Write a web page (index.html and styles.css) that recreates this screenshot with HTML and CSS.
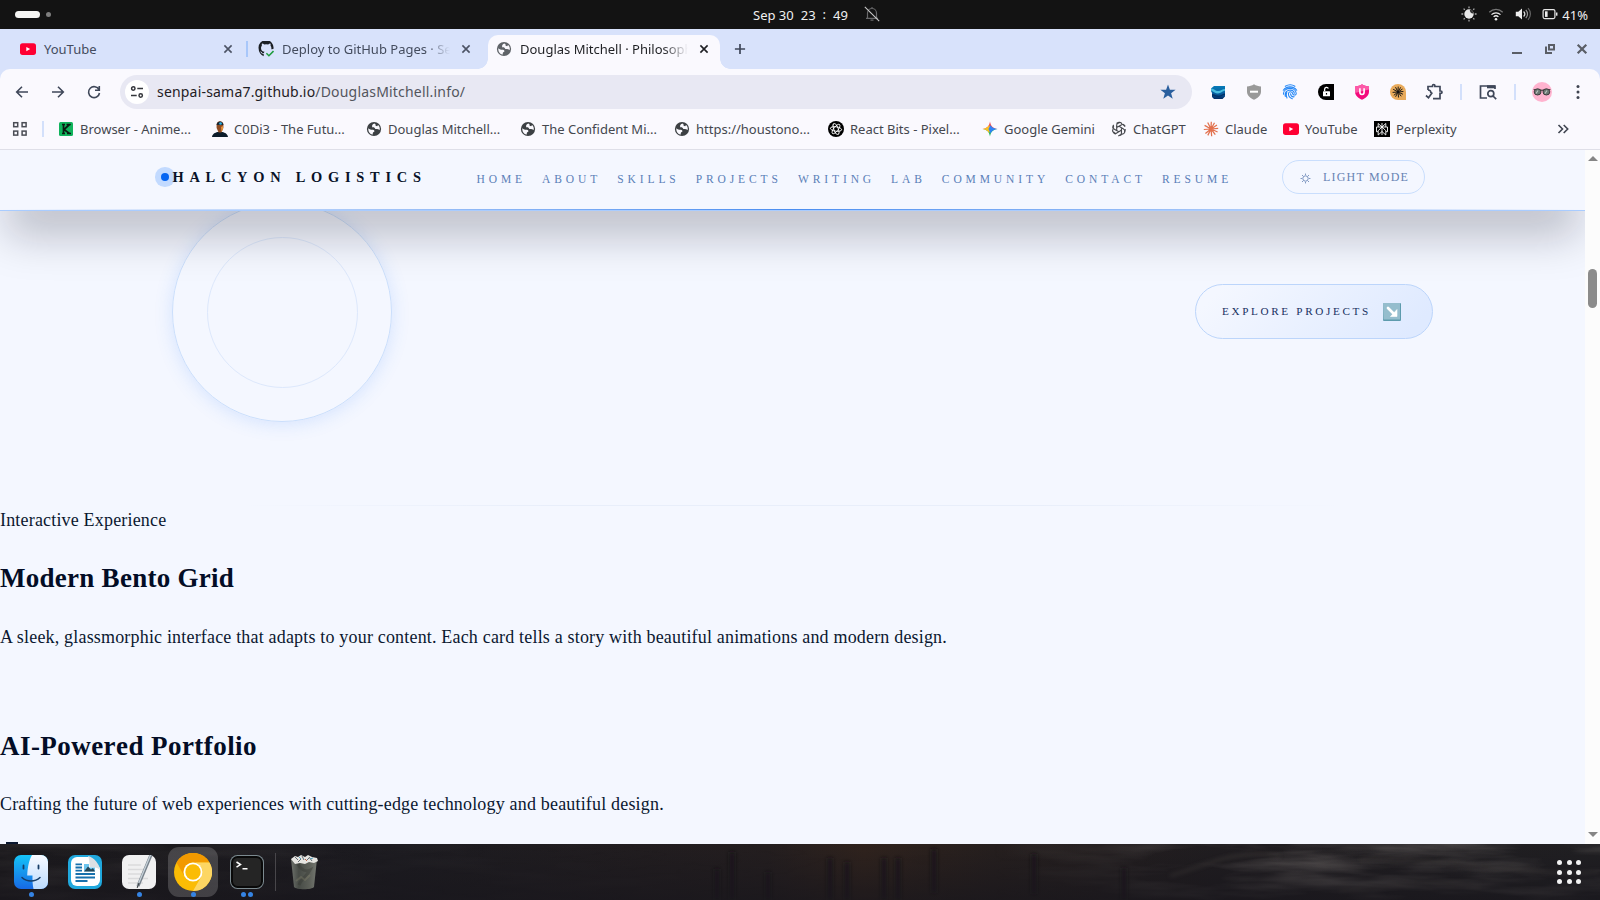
FILE: index.html
```html
<!DOCTYPE html>
<html lang="en">
<head>
<meta charset="utf-8">
<title>Douglas Mitchell · Philosophy</title>
<link rel="stylesheet" href="styles.css">
</head>
<body>
<svg class="defs" width="0" height="0" aria-hidden="true">
  <defs>
    <symbol id="globe" viewBox="0 0 16 16"><circle cx="8" cy="8" r="7.1" fill="currentColor"/><path d="M8.300 2.500C6 3.500 5.700 5 6.400 6.400c1.300-.4 2.400.2 2.900 1.600 1.300-.2 2.700-.2 4.400 1.100.4-2.200-.2-4-1.600-5.200l-1 1.300-1.500-.5-.1-1.500Z" fill="#faf9fe"/><path d="M2.300 7.300c1.500 1.600 3 1.500 4.700 1.500.9 0 1.500.8 1.400 1.800L7 11.400l-.5 2.300C4 13.200 2 10.700 2.300 7.300" fill="#faf9fe"/></symbol>
    <symbol id="yt" viewBox="0 0 16 16"><rect y="2.3" width="16" height="11.6" rx="2.6" fill="#ff0033"/><path d="M6.3 5.9v4.4L10.2 8.1Z" fill="#fff"/></symbol>
    <symbol id="cross" viewBox="0 0 16 16"><path d="m4.4 4.4 7.2 7.2m0-7.2-7.2 7.2" fill="none" stroke="currentColor" stroke-width="1.6"/></symbol>
    <symbol id="burst" viewBox="0 0 16 16"><path d="M8 8 8.3.8M8 8 11.5 1.8M8 8l6-4M8 8l7.2-.7M8 8l6.600 3M8 8l4.300 5.700M8 8l.7 7.300M8 8l-3.200 6.400M8 8l-5.600 4.400M8 8 .8 8.500M8 8 1.600 4.400M8 8 4.700 1.500" stroke="currentColor" stroke-width="1.250" fill="none"/></symbol>
  </defs>
</svg>
<div class="desktop">
  <div class="topbar">
    <div class="workspaces"><i class="pill"></i><i class="dot"></i></div>
    <div class="clock"><span>Sep 30</span><span>23</span><span class="colon">:</span><span>49</span>
      <svg class="bell" width="16" height="16" viewBox="0 0 16 16" fill="none"><path d="M3.500 12.200V7a4.500 4.500 0 0 1 9 0v5.200M2 12.400h12M8 1v1.600M6.500 14.200h3" stroke="#68686a" stroke-width="1.200"/><path d="m.8.800 14.400 14.400" stroke="#c9c9c9" stroke-width="1.100"/></svg>
    </div>
    <div class="tray">
      <svg width="16" height="16" viewBox="0 0 16 16"><circle cx="8" cy="8" r="4.700" fill="#e8e8e8"/><path d="M9 3.400A3.200 3.200 0 0 0 12.500 7.500 4.600 4.600 0 0 0 9 3.400" fill="#333"/><path d="M8 .4v1.800M8 13.800v1.800M.4 8h1.800M13.800 8h1.800M2.600 2.600l1.200 1.200M12.200 12.200l1.200 1.200M2.600 13.400l1.200-1.200M12.200 3.800l1.200-1.200" stroke="#a9a9a9" stroke-width="1.300"/></svg>
      <svg width="16" height="16" viewBox="0 0 16 16" fill="none"><path d="M1.300 6.200a9.500 9.500 0 0 1 13.400 0" stroke="#777" stroke-width="1.300"/><path d="M3.500 8.600a6.500 6.500 0 0 1 9 0M5.600 10.900a3.500 3.500 0 0 1 4.800 0" stroke="#eee" stroke-width="1.300"/><circle cx="8" cy="13.200" r="1.300" fill="#eee"/></svg>
      <svg width="16" height="16" viewBox="0 0 16 16" fill="none"><path d="M.8 5.800h2.500L7 2.500v11L3.300 10.200H.8Z" fill="#eee"/><path d="M8.600 5.500c1.400 1.400 1.400 3.600 0 5" stroke="#ddd" stroke-width="1.200"/><path d="M10.800 3.800c2.300 2.400 2.300 6 0 8.400" stroke="#999" stroke-width="1.200"/><path d="M13 2.200c3.200 3.400 3.200 8.200 0 11.600" stroke="#666" stroke-width="1.200"/></svg>
      <svg width="16" height="16" viewBox="0 0 16 16" fill="none"><rect x="1.100" y="3.600" width="11.800" height="9" rx="1.500" stroke="#e6e6e6" stroke-width="1.200"/><rect x="3" y="5.300" width="2.600" height="5.600" fill="#eee"/><path d="M14.700 6.500v3.200" stroke="#e6e6e6" stroke-width="1.500"/></svg>
      <span>41%</span>
    </div>
  </div>

  <div class="tabstrip">
    <div class="tab"><svg width="16" height="16"><use href="#yt"/></svg><span class="title">YouTube</span><svg class="close" width="16" height="16"><use href="#cross"/></svg></div>
    <div class="tab divided"><svg width="16" height="16" viewBox="0 0 16 16"><path d="M5.700 15.200v-2.400c-2 .3-2.600-.9-3.200-1.700l-.7-.5c1.500-.4 2 .9 2.600 1.300.6.300 1.100.200 1.500 0 .1-.5.400-.9.700-1.100C4.300 10.500 3 9.500 3 7c0-1 .3-1.700.9-2.300-.2-.6-.2-1.300.1-2.100.9 0 1.600.500 2.200.9a8 8 0 0 1 4 0c.6-.4 1.400-.9 2.200-.9.300.8.300 1.500.1 2.100.6.600.9 1.400.9 2.300 0 .5 0 .9-.2 1.300l2.200-.3A7.500 7.500 0 1 0 .6 7.600c0 3.500 2.100 6.400 5.100 7.600" fill="#1b1f24"/><path d="m8.400 12.300 2.500 2.400 4.600-4.600" fill="none" stroke="#1f9c3d" stroke-width="1.500"/></svg><span class="title fade">Deploy to GitHub Pages · Se</span><svg class="close" width="16" height="16"><use href="#cross"/></svg></div>
    <div class="tab active"><svg width="16" height="16" class="gray"><use href="#globe"/></svg><span class="title fade">Douglas Mitchell · Philosoph</span><svg class="close" width="16" height="16"><use href="#cross"/></svg></div>
    <svg class="newtab" width="16" height="16" viewBox="0 0 16 16"><path d="M8 2.900v10.200M2.900 8h10.200" stroke="#3f4759" stroke-width="1.700"/></svg>
    <div class="wincontrols">
      <svg width="12" height="12" viewBox="0 0 12 12"><path d="M1 10h10" stroke="#5a5e66" stroke-width="2"/></svg>
      <svg width="12" height="12" viewBox="0 0 12 12" fill="none" stroke="#5a5e66" stroke-width="2"><path d="M5 2h5v4.500H5ZM2 3.500V10h6"/></svg>
      <svg width="12" height="12" viewBox="0 0 12 12"><path d="m1.700 1.700 8.600 8.600m0-8.600-8.600 8.600" stroke="#5a5e66" stroke-width="2.200"/></svg>
    </div>
  </div>

  <div class="chrome-wrap">
  <div class="chrome">
    <div class="toolbar">
      <div class="navbtns">
        <svg width="16" height="16" viewBox="0 0 16 16"><path d="M14 8H3M8 2.700 2.700 8 8 13.300"/></svg>
        <svg width="16" height="16" viewBox="0 0 16 16"><path d="M2 8h11M8 2.700 13.300 8 8 13.300"/></svg>
        <svg width="16" height="16" viewBox="0 0 16 16"><path d="M13 5.700A5.500 5.500 0 1 0 13.500 9M13.300 1.900v4.300H9"/></svg>
      </div>
      <div class="omnibox">
        <span class="site"><svg width="14" height="14" viewBox="0 0 14 14" fill="none" stroke="#33353b" stroke-width="1.500"><circle cx="3.300" cy="3.500" r="1.700"/><path d="M7.300 3.500H13M1 10.500h5.700"/><circle cx="10.700" cy="10.500" r="1.700"/></svg></span>
        <span class="url">senpai-sama7.github.io<em>/DouglasMitchell.info/</em></span>
        <svg class="star" width="16" height="16" viewBox="0 0 16 16"><path d="m8 .4 1.900 5.300 5.700.1-4.500 3.500 1.600 5.500L8 11.600l-4.700 3.200 1.600-5.500L.4 5.800l5.700-.1Z" fill="#2a5f9e"/></svg>
      </div>
      <div class="extensions">
        <span><svg width="16" height="16" viewBox="0 0 16 16"><defs><linearGradient id="sea" x1="0" y1="0" x2="0" y2="1"><stop offset="0" stop-color="#067bb8"/><stop offset=".6" stop-color="#075c9e"/><stop offset="1" stop-color="#032a62"/></linearGradient></defs><path d="M4 2h11v10.500L12.500 15H4L2 13V9L1 7V4.500Z" fill="url(#sea)"/><path d="M1 4.500c3-.3 4 2.500 7 2.500 3 0 4-2 7-2v1.800c-3 .2-4 2.700-7 2.700S4 7.500 1 6.500Z" fill="#48bddf"/><path d="M2 10c3 0 4 1.800 6.500 1.800S12.500 9.500 15 9.500V11c-3 0-4 2-6.500 2S5 12 2 12Z" fill="#023268"/></svg></span>
        <span><svg width="16" height="16" viewBox="0 0 16 16"><path d="M8 .3c2 1.500 4.500 2 7 2.200v5.300c0 4-4 6.700-7 8-3-1.300-7-4-7-8V2.500C3.500 2.300 6 1.800 8 .3" fill="#999"/><path d="M4 7.700h8" stroke="#fff" stroke-width="2"/></svg></span>
        <span><svg width="16" height="16" viewBox="0 0 16 16" fill="none" stroke="#2387f7" stroke-width="1.100" stroke-linecap="round"><path d="M3.300 2.300C6.500.3 10 .3 12.900 2.300M1.300 6.200C4.500 1.700 11.500 1.700 14.700 6.200M1.500 10.300C1 3.200 13.500 2 14.200 9.300c.2 2.300-3.200 2.200-3.500.3C10.400 7.300 6.800 7 6.500 9.500c-.2 2.200 1 4.300 3.800 5.300M3.300 12.500C2 5.500 11.500 4 12.400 9.300M5 14c-.8-2-1-4-.2-5.200M8.500 9.700c.3 2.300 1.800 3.300 3.700 3.100"/></svg></span>
        <span><svg width="16" height="16" viewBox="0 0 16 16"><path d="M8 0h8v16H8A8 8 0 0 1 8 0" fill="#000"/><rect x="5" y="7.200" width="7" height="5" rx=".5" fill="#fff"/><path d="M6.600 7V5.300a2 2 0 0 1 3.800-.8" fill="none" stroke="#fff" stroke-width="1.300"/><path d="M8.500 9v1.600" stroke="#000" stroke-width="1.200"/></svg></span>
        <span><svg width="16" height="16" viewBox="0 0 16 16"><path d="M8 .3c2 1.500 4.500 2 7 2.200v5.300c0 4-4 6.700-7 8-3-1.300-7-4-7-8V2.500C3.500 2.300 6 1.800 8 .3" fill="#f30a7c"/><path d="M8 .3c2 1.500 4.500 2 7 2.200v3L1 9V2.500C3.500 2.300 6 1.800 8 .3" fill="#fc5aa8"/><path d="M5.900 4.300v4c0 2.900 4.200 2.900 4.200 0v-4" fill="none" stroke="#fff" stroke-width="1.600"/></svg></span>
        <span><svg width="16" height="16" viewBox="0 0 16 16"><path d="M8 0a8 8 0 0 1 8 8v8H8A8 8 0 0 1 8 0" fill="#e9ab5b"/><use href="#burst" x="2" y="2" width="12" height="12" color="#111"/></svg></span>
        <span><svg width="18" height="18" viewBox="0 0 18 18" fill="none" stroke="#3f4759" stroke-width="1.700"><path d="M3 7V3.500h4.500V2.700a1.200 1.200 0 0 1 2.400 0v.8H15V8h.8a1.200 1.200 0 0 1 0 2.400H15v5.300H8"/><path d="m1 12.500 2.500 2.300L7.300 9.500M3 7c2 0 3 1 2.800 3"/></svg></span>
        <i></i>
        <span><svg width="18" height="18" viewBox="0 0 18 18" fill="none" stroke="#3f4759" stroke-width="1.700"><path d="M8 15H1.500V3H16v3"/><path d="M8 3.800h8" stroke-width="3"/><circle cx="11.800" cy="10.700" r="3"/><path d="m14 13 3.200 3.200"/></svg></span>
        <i></i>
        <span><svg width="20" height="20" viewBox="0 0 20 20"><circle cx="10" cy="10" r="10" fill="#ffb3cf"/><path d="M1.600 7.500c5 0 6 0 8.400.9 2.400-.9 3.400-.9 8.400-.9" fill="none" stroke="#4a4245" stroke-width="1.200"/><ellipse cx="5.600" cy="9.900" rx="3.400" ry="3.100" fill="#6b7672" stroke="#40393c"/><ellipse cx="14.400" cy="9.900" rx="3.400" ry="3.100" fill="#6b7672" stroke="#40393c"/><path d="m4 11.500 2-3M13 11.500l2-3" stroke="#bcc5c0" stroke-width="1.200"/></svg></span>
        <span><svg width="16" height="16" viewBox="0 0 16 16" fill="#3f4450"><circle cx="8" cy="2.600" r="1.500"/><circle cx="8" cy="8" r="1.500"/><circle cx="8" cy="13.400" r="1.500"/></svg></span>
      </div>
    </div>
    <div class="bookmarks">
      <svg class="apps" width="16" height="16" viewBox="0 0 16 16" fill="none" stroke="#4a4d55" stroke-width="1.500"><rect x="1.700" y="1.700" width="4" height="4"/><rect x="10.100" y="1.700" width="4" height="4"/><rect x="1.700" y="10.100" width="4" height="4"/><rect x="10.100" y="10.100" width="4" height="4"/></svg>
      <i class="sep"></i>
      <div class="bm wide"><svg width="16" height="16" viewBox="0 0 16 16"><rect x="1" y="1" width="14" height="14" rx="1.500" fill="#10b35c"/><path d="M4 3.500h3M5.500 3.500v9M4 12.500h3M8.500 3.500h4.300M11.500 3.500 6 8.500l5.500 4M9 12.500h4" stroke="#0a1a12" stroke-width="1.700" fill="none"/></svg>Browser - Anime...</div>
      <div class="bm wide"><svg width="16" height="16" viewBox="0 0 16 16"><path d="M0 16c.5-3.500 3-4 5.500-5h5c2.500 1 5 1.500 5.500 5Z" fill="#0c1c2b"/><path d="M4.600 3.500C5-.8 11-.8 11.400 3.500V7l-2 4.500H6.600l-2-4.500Z" fill="#8c4a22"/><path d="M4.600 4C4.800-.7 11.200-.7 11.400 4Z" fill="#182733"/><circle cx="8.500" cy="2.500" r="1.300" fill="#32b6e8"/><path d="m9 6 2-1v3l-1.500 3Z" fill="#e59239"/></svg>C0Di3 - The Futu...</div>
      <div class="bm wide"><svg width="16" height="16" class="dark"><use href="#globe"/></svg>Douglas Mitchell...</div>
      <div class="bm wide"><svg width="16" height="16" class="dark"><use href="#globe"/></svg>The Confident Mi...</div>
      <div class="bm wide"><svg width="16" height="16" class="dark"><use href="#globe"/></svg>https://houstono...</div>
      <div class="bm wide"><svg width="16" height="16" viewBox="0 0 16 16" fill="none" stroke="#fff" stroke-width=".9"><circle cx="8" cy="8" r="8" fill="#000" stroke="none"/><ellipse cx="8" cy="8" rx="5.700" ry="2.200" transform="rotate(8 8 8)"/><ellipse cx="8" cy="8" rx="5.700" ry="2.200" transform="rotate(68 8 8)"/><ellipse cx="8" cy="8" rx="5.700" ry="2.200" transform="rotate(128 8 8)"/></svg>React Bits - Pixel...</div>
      <div class="bm gem"><svg width="16" height="16" viewBox="0 0 16 16"><path d="M8 .5C8.700 5 11 7.300 15.500 8H.5C5 7.300 7.300 5 8 .5" fill="#f5484a"/><path d="M8 15.500C8.700 11 11 8.700 15.500 8H.5C5 8.700 7.300 11 8 15.500" fill="#1bb35a"/><path d="M.5 8C4 7.500 6 6 7 4l2 4-2 4C6 10 4 8.500.5 8" fill="#fcc021"/><path d="M15.500 8C11 7.300 9.300 6 8.600 4L6.500 8l2.100 4.500C9.500 10 11.500 8.600 15.500 8" fill="#2e83f6"/></svg>Google Gemini</div>
      <div class="bm gpt"><svg width="16" height="16" viewBox="0 0 16 16" fill="none" stroke="#45474c" stroke-width="1.150"><g id="petal"><path d="M5.700 9.300V4.100a2.800 2.800 0 0 1 5.300-1.200M5.700 6.500l4.500-2.600a2.800 2.800 0 0 1 4 1.500"/></g><use href="#petal" transform="rotate(120 8 8)"/><use href="#petal" transform="rotate(240 8 8)"/><circle cx="8" cy="8" r="6.200" stroke-dasharray="3 3.500"/></svg>ChatGPT</div>
      <div class="bm cla"><svg width="16" height="16" class="coral"><use href="#burst"/></svg>Claude</div>
      <div class="bm you"><svg width="16" height="16"><use href="#yt"/></svg>YouTube</div>
      <div class="bm"><svg width="16" height="16" viewBox="0 0 16 16" fill="none" stroke="#fff" stroke-width=".9"><path d="M0 0h16v16H0Z" fill="#000" stroke="none"/><path d="M8 2v12M8 6 4.200 2.500V6M8 6l3.800-3.500V6M2.500 6h11v4.700h-1.700V14L8 10.500 4.200 14v-3.300H2.500ZM8 6l-3.800 3.700v1M8 6l3.800 3.700v1"/></svg>Perplexity</div>
      <svg class="more" width="14" height="14" viewBox="0 0 14 14" fill="none" stroke="#3f4450" stroke-width="1.600"><path d="m2.500 3 4 4-4 4M7.700 3l4 4-4 4"/></svg>
    </div>
  </div>
  </div>

  <div class="viewport">
    <div class="page">
      <header class="site-header">
        <div class="brand"><i class="orb"></i>HALCYON LOGISTICS</div>
        <nav><a>HOME</a><a>ABOUT</a><a>SKILLS</a><a>PROJECTS</a><a>WRITING</a><a>LAB</a><a>COMMUNITY</a><a>CONTACT</a><a>RESUME</a></nav>
        <div class="mode"><svg width="11" height="11" viewBox="0 0 11 11" fill="none" stroke="#6783b4" stroke-width=".9"><circle cx="5.500" cy="5.500" r="2.700"/><path d="M5.500.6v1.300M5.500 9.100v1.300M.6 5.500h1.300M9.100 5.500h1.300M2 2l.9.9M8.100 8.100l.9.9M2 9l.9-.9M8.100 2.900 9 2"/></svg>LIGHT MODE</div>
      </header>
      <section class="hero">
        <div class="ring"><div class="inner"></div></div>
        <div class="cta"><span>EXPLORE PROJECTS</span><svg width="18" height="18" viewBox="0 0 18 18"><rect width="18" height="18" rx="1" fill="#5d9bad"/><path d="M0 0h17v16.500H.5Z" fill="#95bdcd"/><path d="m5 5 6 6" stroke="#fff" stroke-width="2.700" stroke-linecap="round"/><path d="M14 6.500V13.500H7.500Z" fill="#fff" stroke="#fff" stroke-width=".6"/></svg></div>
      </section>
      <section class="copy">
        <div>Interactive Experience</div>
        <h2>Modern Bento Grid</h2>
        <p>A sleek, glassmorphic interface that adapts to your content. Each card tells a story with beautiful animations and modern design.</p>
        <h2 class="second">AI-Powered Portfolio</h2>
        <p>Crafting the future of web experiences with cutting-edge technology and beautiful design.</p>
        <i class="card-top"></i>
      </section>
    </div>
    <div class="scrollbar"><i class="up"></i><i class="thumb"></i><i class="down"></i></div>
  </div>

  <div class="dock">
    <svg class="wallpaper" width="1600" height="56" viewBox="0 0 1600 56" preserveAspectRatio="none">
      <defs>
        <filter id="cloud" x="0" y="0" width="100%" height="100%"><feTurbulence type="fractalNoise" baseFrequency=".008 .06" numOctaves="4" seed="7"/><feColorMatrix values="0 0 0 0 .3 0 0 0 0 .27 0 0 0 0 .25 1.600 0 0 0 -.65"/></filter>
        <filter id="soft"><feGaussianBlur stdDeviation="2"/></filter>
        <linearGradient id="ground"><stop offset="0" stop-color="#1b191c"/><stop offset=".25" stop-color="#1c1b20"/><stop offset=".48" stop-color="#241e1f"/><stop offset=".54" stop-color="#30231d"/><stop offset=".62" stop-color="#261f1e"/><stop offset=".76" stop-color="#201d20"/><stop offset="1" stop-color="#201f22"/></linearGradient>
        <linearGradient id="reach"><stop offset="0" stop-color="#444"/><stop offset=".25" stop-color="#111"/><stop offset=".62" stop-color="#000"/><stop offset=".8" stop-color="#999"/><stop offset="1" stop-color="#888"/></linearGradient>
        <mask id="sky"><rect width="1600" height="56" fill="url(#reach)"/></mask>
        <linearGradient id="shade" x1="0" y1="0" x2="0" y2="1"><stop offset="0" stop-color="#18161c" stop-opacity="0"/><stop offset="1" stop-color="#18161c" stop-opacity=".7"/></linearGradient>
      </defs>
      <rect width="1600" height="56" fill="url(#ground)"/>
      <g mask="url(#sky)"><rect width="1600" height="56" filter="url(#cloud)"/></g>
      <g filter="url(#soft)" stroke="#1a181d" stroke-width="5" fill="none"><path d="M717 25v31M732 8v48M768 28v28M830 14v42M847 18v38M884 14v42M898 14v42M934 5v44M1034 10v40M1124 24v32"/></g>
      <g filter="url(#soft)" stroke="#4e4844" stroke-width="2.500" fill="none" opacity=".6"><path d="M1360 16c60-6 90 6 130 8s70 8 110 4M1340 46c50-2 90-12 140-4M1170 32c40-12 60-26 110-20"/></g>
      <rect width="1600" height="56" fill="url(#shade)"/>
    </svg>
    <div class="apps-row">
      <div class="app"><svg width="34" height="34" viewBox="0 0 34 34"><defs><linearGradient id="fb" x1="0" y1="0" x2="0" y2="1"><stop offset="0" stop-color="#16c4f8"/><stop offset="1" stop-color="#1769e4"/></linearGradient><linearGradient id="fw" x1="0" y1="0" x2="0" y2="1"><stop offset="0" stop-color="#f8faff"/><stop offset="1" stop-color="#bcdcff"/></linearGradient></defs><rect width="34" height="34" rx="7" fill="url(#fb)"/><path d="M18 0h9a7 7 0 0 1 7 7v20a7 7 0 0 1-7 7h-7.500c-.8-4-1.200-8-1-13.500h-5.300C13.500 13 15 5 18 0" fill="url(#fw)"/><path d="M9.500 10.500v3M24.500 10.500v3" stroke="#173d66" stroke-width="1.800" stroke-linecap="round"/><path d="M8 22.500c5 4.700 13 4.700 18 0" stroke="#173d66" stroke-width="1.500" fill="none" stroke-linecap="round"/></svg><b></b></div>
      <div class="app"><svg width="34" height="34" viewBox="0 0 34 34"><rect width="34" height="34" rx="7" fill="#20a8dd"/><path d="M9 2h12l11 11v12a6 6 0 0 1-6 6H9a6 6 0 0 1-6-6V8a6 6 0 0 1 6-6" fill="#fff"/><path d="M20 1c2 5 1 8 2 11 3 0 7 0 10 3 0-5-6-13-12-14" fill="#dce0e4"/><path d="M7.500 9.300H14M7.500 12.500H14M7.500 15.700H14M7.500 19h19.500M7.500 22.500h19.500M7.500 26h12" stroke="#1771ad" stroke-width="1.800"/><path d="M16 16.500V9h5v3.500h6v4Z" fill="#6cc5ef"/><path d="m16 16.500 4-5 3 3 2-1.500 2 3.500Z" fill="#264657"/></svg></div>
      <div class="app"><svg width="34" height="34" viewBox="0 0 34 34"><rect width="34" height="34" rx="7" fill="#f0f0f1"/><path d="M6 10h13M6 14.500h17M6 19h15M6 23.500h20M6 28h15" stroke="#dadadc" stroke-width="1.500"/><path d="M29 0 16 31" stroke="#77818b" stroke-width="3.200"/><path d="M28.500 0 15.500 31" stroke="#c6d1d9" stroke-width="1.300"/><path d="m17 28-1.800 4.700" stroke="#3f454a" stroke-width="1.200"/></svg><b></b></div>
      <div class="app current"><svg width="38" height="38" viewBox="0 0 38 38"><circle cx="19" cy="19" r="19" fill="#fbbc05"/><path d="M2.500 9.500A19 19 0 0 1 35.500 9.500H19A9.500 9.500 0 0 0 10.800 23.700Z" fill="#f29900"/><path d="M35.500 9.500A19 19 0 0 1 19 38l8.200-14.300A9.500 9.500 0 0 0 19 9.500Z" fill="#fdd663"/><circle cx="19" cy="19" r="9.500" fill="#fff"/><circle cx="19" cy="19" r="7.700" fill="#fbbc05"/></svg><b></b></div>
      <div class="app"><svg width="34" height="34" viewBox="0 0 34 34"><rect width="34" height="34" rx="7.500" fill="#7c8a90"/><rect x="1" y="1" width="32" height="32" rx="6.500" fill="#090909"/><rect x="3" y="3" width="28" height="28" rx="4.500" fill="#252525"/><path d="m6.500 7 4 2.600-4 2.600M12.500 13.700h5" fill="none" stroke="#fff" stroke-width="1.500"/></svg><b></b><b></b></div>
      <i class="dock-sep"></i>
      <div class="app trash"><svg width="28" height="36" viewBox="0 0 28 36"><defs><linearGradient id="bin"><stop offset="0" stop-color="#6d716b"/><stop offset=".3" stop-color="#474b46"/><stop offset=".7" stop-color="#5c5f58"/><stop offset="1" stop-color="#757871"/></linearGradient></defs><path d="M1 5h26l-3 28c-2 3-18 3-20 0Z" fill="url(#bin)"/><path d="M8 10c3 6 8 8 12 6-3 6-9 9-11 15" fill="none" stroke="#343832" stroke-width="3" opacity=".4"/><path d="m6 27 5-4 4 3 5-5" fill="none" stroke="#8f8a72" stroke-width="2" opacity=".3"/><path d="m1 5 4-3 3 1 3-2 4 2 3-2 4 2 5 1 1 3-4 2-5-1-4 2-5-1-5 1Z" fill="#e5e4e0"/><path d="m5 3 3 3M12 2l2 4M19 3l3 4M8 8l3-3M16 7l3-3" stroke="#646d73"/><path d="m9 3 2 2M20 5l3-1" stroke="#55a0bd"/><path d="m15 5 2 2" stroke="#bd664d"/></svg></div>
    </div>
    <div class="grid"><i></i><i></i><i></i><i></i><i></i><i></i><i></i><i></i><i></i></div>
  </div>
</div>
</body>
</html>
```
FILE: styles.css
```css
* { box-sizing: border-box; }
body { margin: 0; overflow: hidden; }
svg { display: block; flex: none; }
.defs { position: absolute; }
.desktop { width: 1600px; height: 900px; display: flex; flex-direction: column; overflow: hidden; font-family: "Noto Sans", "Open Sans", sans-serif; background: #131313; }

/* System bar */
.topbar { height: 29px; flex: none; display: grid; grid-template-columns: 1fr auto 1fr; align-items: center; color: #f0f0f0; font-size: 13px; line-height: 29px; }
.workspaces { display: flex; align-items: center; gap: 6px; padding-left: 15px; }
.pill { width: 25px; height: 7px; border-radius: 4px; background: #f5f5f3; }
.workspaces .dot { width: 5px; height: 5px; border-radius: 50%; background: #7e7e7e; }
.clock { display: flex; align-items: center; gap: 7px; padding-left: 33px; height: 29px; padding-top: 2px; }
.colon { padding-bottom: 2px; }
.bell { margin: -3px 0 0 9px; }
.tray { display: flex; align-items: center; justify-content: flex-end; gap: 11px; padding-right: 12px; height: 29px; }
.tray svg { margin: -1px 1px 0 -1px; }
.tray span { margin: 2px 0 0 -8px; }

/* Tabs */
.tabstrip { height: 40px; flex: none; display: flex; align-items: flex-end; gap: 6px; padding-left: 12px; background: #d8e2fb; color: #444c5e; font-size: 13px; }
.tab { width: 232px; height: 34px; display: flex; align-items: center; gap: 8px; padding: 0 8px 6px; position: relative; }
.title { width: 168px; white-space: nowrap; line-height: 20px; }
.tab .close { color: #4c5365; }
.fade { -webkit-mask-image: linear-gradient(90deg, #000 143px, transparent 168px); mask-image: linear-gradient(90deg, #000 143px, transparent 168px); }
.divided::before { content: ""; position: absolute; left: -4px; top: 6px; width: 2px; height: 16px; background: #a8c7fa; }
.active { background: #faf9fe; border-radius: 10px 10px 0 0; color: #1f2024; }
.tab.active .close { color: #1f2024; }
.active::before, .active::after { content: ""; position: absolute; bottom: 0; width: 10px; height: 10px; }
.active::before { left: -10px; background: radial-gradient(circle at 0 0, transparent 9.500px, #faf9fe 10px); }
.active::after { right: -10px; background: radial-gradient(circle at 100% 0, transparent 9.500px, #faf9fe 10px); }
.gray { color: #5f6368; }
.dark { color: #3c4043; }
.coral { color: #e2704d; }
.newtab { margin: 0 0 12px 6px; }
.wincontrols { display: flex; gap: 20.500px; margin: 0 12px 14px auto; }

/* Toolbar */
.chrome-wrap { flex: none; background: #d8e2fb; }
.chrome { height: 81px; background: #faf9fe; border-bottom: 1px solid #dfdfe8; border-radius: 10px 10px 0 0; }
.toolbar { height: 46px; display: flex; align-items: center; }
.navbtns { width: 120px; padding-left: 14px; display: flex; gap: 20px; }
.navbtns svg { fill: none; stroke: #3f4759; stroke-width: 1.600; }
.omnibox { width: 1072px; height: 34px; display: flex; align-items: center; border-radius: 17px; background: #e8e8f3; padding: 0 16px 0 5px; }
.site { width: 24px; height: 24px; border-radius: 50%; background: #fff; display: grid; place-items: center; }
.url { margin: -2px 0 0 8px; font-size: 14px; letter-spacing: .19px; color: #1f2024; }
.url em { font-style: normal; color: #53555d; }
.star { margin-left: auto; }
.extensions { margin-left: 8px; display: flex; align-items: center; }
.extensions span { width: 36px; height: 28px; display: grid; place-items: center; }
.extensions i { width: 2px; height: 16px; margin: 0 8px; background: #d3e0fb; }
.bookmarks { height: 34px; display: flex; align-items: center; padding: 0 30px 6px 12px; color: #44474e; font-size: 13px; }
.sep { width: 2px; height: 16px; margin: 0 14px; background: #d3e0fb; }
.bm { display: flex; align-items: center; gap: 6px; white-space: nowrap; line-height: 20px; }
.wide { width: 154px; flex: none; }
.gem { width: 129px; }
.gpt { width: 92px; }
.cla { width: 80px; }
.you { width: 91px; }
.more { margin-left: auto; }

/* Page */
.viewport { flex: 1; display: flex; min-height: 0; background: #fcfcfc; }
.page { width: 1585px; background: #f4f7ff; overflow: hidden; font-family: "Liberation Serif", serif; color: #0b1830; }
.site-header { height: 61px; position: relative; z-index: 2; display: flex; align-items: flex-start; background: #f4f7ff; border-bottom: 1px solid #a9ccff; box-shadow: 0 30px 44px -6px rgba(10, 12, 28, .25); padding-left: 172px; }
.site-header::after { content: ""; position: absolute; left: 0; right: 0; bottom: 0; height: 1px; background: linear-gradient(90deg, transparent, #4a8df0 50%, transparent); }
.brand { position: relative; width: 304.500px; padding: 18px 0 0 .5px; line-height: 18px; font-size: 14.400px; font-weight: 700; letter-spacing: .4em; color: #081228; white-space: nowrap; }
.orb { position: absolute; left: -11px; top: 23px; width: 8px; height: 8px; border-radius: 50%; background: #0565f2; box-shadow: 0 0 0 6px #c2daff; z-index: -1; }
nav { display: flex; gap: 16px; padding-top: 22px; width: 805.500px; font-size: 11.520px; line-height: 14px; letter-spacing: 3.900px; color: #5b80b8; }
.mode { width: 143px; height: 34px; margin-top: 10px; display: flex; align-items: center; gap: 12px; padding: 0 0 0 17px; border: 1px solid #c9defd; border-radius: 17px; color: #6783b4; font-size: 12px; letter-spacing: .1em; white-space: nowrap; }
.mode svg { margin-top: 2px; }
.hero { height: 294px; display: flex; justify-content: space-between; padding: 0 152px 0 172px; }
.ring { width: 220px; height: 220px; margin-top: -9px; border-radius: 50%; border: 1px solid #cbdffc; display: grid; place-items: center; box-shadow: 0 2px 18px rgba(60, 130, 250, .17); }
.inner { width: 151px; height: 151px; border-radius: 50%; border: 1px solid #dde8fc; }
.cta { width: 238px; height: 55px; margin-top: 73px; display: flex; align-items: center; gap: 12.500px; padding-left: 26px; border: 1px solid #bcd5fb; border-radius: 28px; background: linear-gradient(135deg, #f4f7ff 10%, #dfeaff 90%); color: #18305f; font-size: 11.200px; letter-spacing: .236em; white-space: nowrap; }
.cta span { margin-top: -1px; }
.copy { font-size: 18px; line-height: 28.800px; letter-spacing: .18px; border-top: 1px solid transparent; border-image: linear-gradient(90deg, transparent 15%, #e8eefa 35%, #e8eefa 65%, transparent 85%) 1; }
.copy h2 { font-size: 27px; line-height: 43.200px; margin: 22px 0 23px; color: #030d26; letter-spacing: .27px; }
.copy p { margin: 0; }
.copy .second { margin: 73px 0 22px; font-kerning: none; letter-spacing: .44px; }
.card-top { display: block; width: 12px; height: 6px; margin: 23px 0 0 6px; background: #0b1830; }
.scrollbar { width: 15px; display: flex; flex-direction: column; align-items: center; padding: 6px 0 7px; }
.up { border: 5px solid transparent; border-top: 0; border-bottom: 5px solid #858585; }
.down { margin-top: auto; border: 5px solid transparent; border-bottom: 0; border-top: 5px solid #858585; }
.thumb { width: 9px; height: 39px; margin-top: 108px; border-radius: 5px; background: #8b8b8b; }

/* Dock */
.dock { height: 56px; flex: none; position: relative; display: flex; align-items: center; justify-content: space-between; padding: 0 19px 0 6px; background: #1d1b1f; overflow: hidden; }
.wallpaper { position: absolute; inset: 0; }
.apps-row { position: relative; display: flex; align-items: center; gap: 4px; }
.app { width: 50px; height: 50px; display: flex; flex-wrap: wrap; place-content: center; column-gap: 2px; border-radius: 11px; }
.app svg { margin: 0 6px; }
.app b { width: 5px; height: 5px; border-radius: 50%; background: #3584e4; margin-bottom: -5px; position: relative; top: 3px; }
.current { background: rgba(255, 255, 255, .18); }
.current b { margin-top: -2px; margin-bottom: -3px; }
.dock-sep { width: 1px; height: 38px; margin: 0 -1px; background: #48464a; }
.grid { position: relative; display: grid; grid-template-columns: repeat(3, 5px); gap: 4.500px; }
.grid i { height: 5px; border-radius: 50%; background: #f3f3f3; }
```
